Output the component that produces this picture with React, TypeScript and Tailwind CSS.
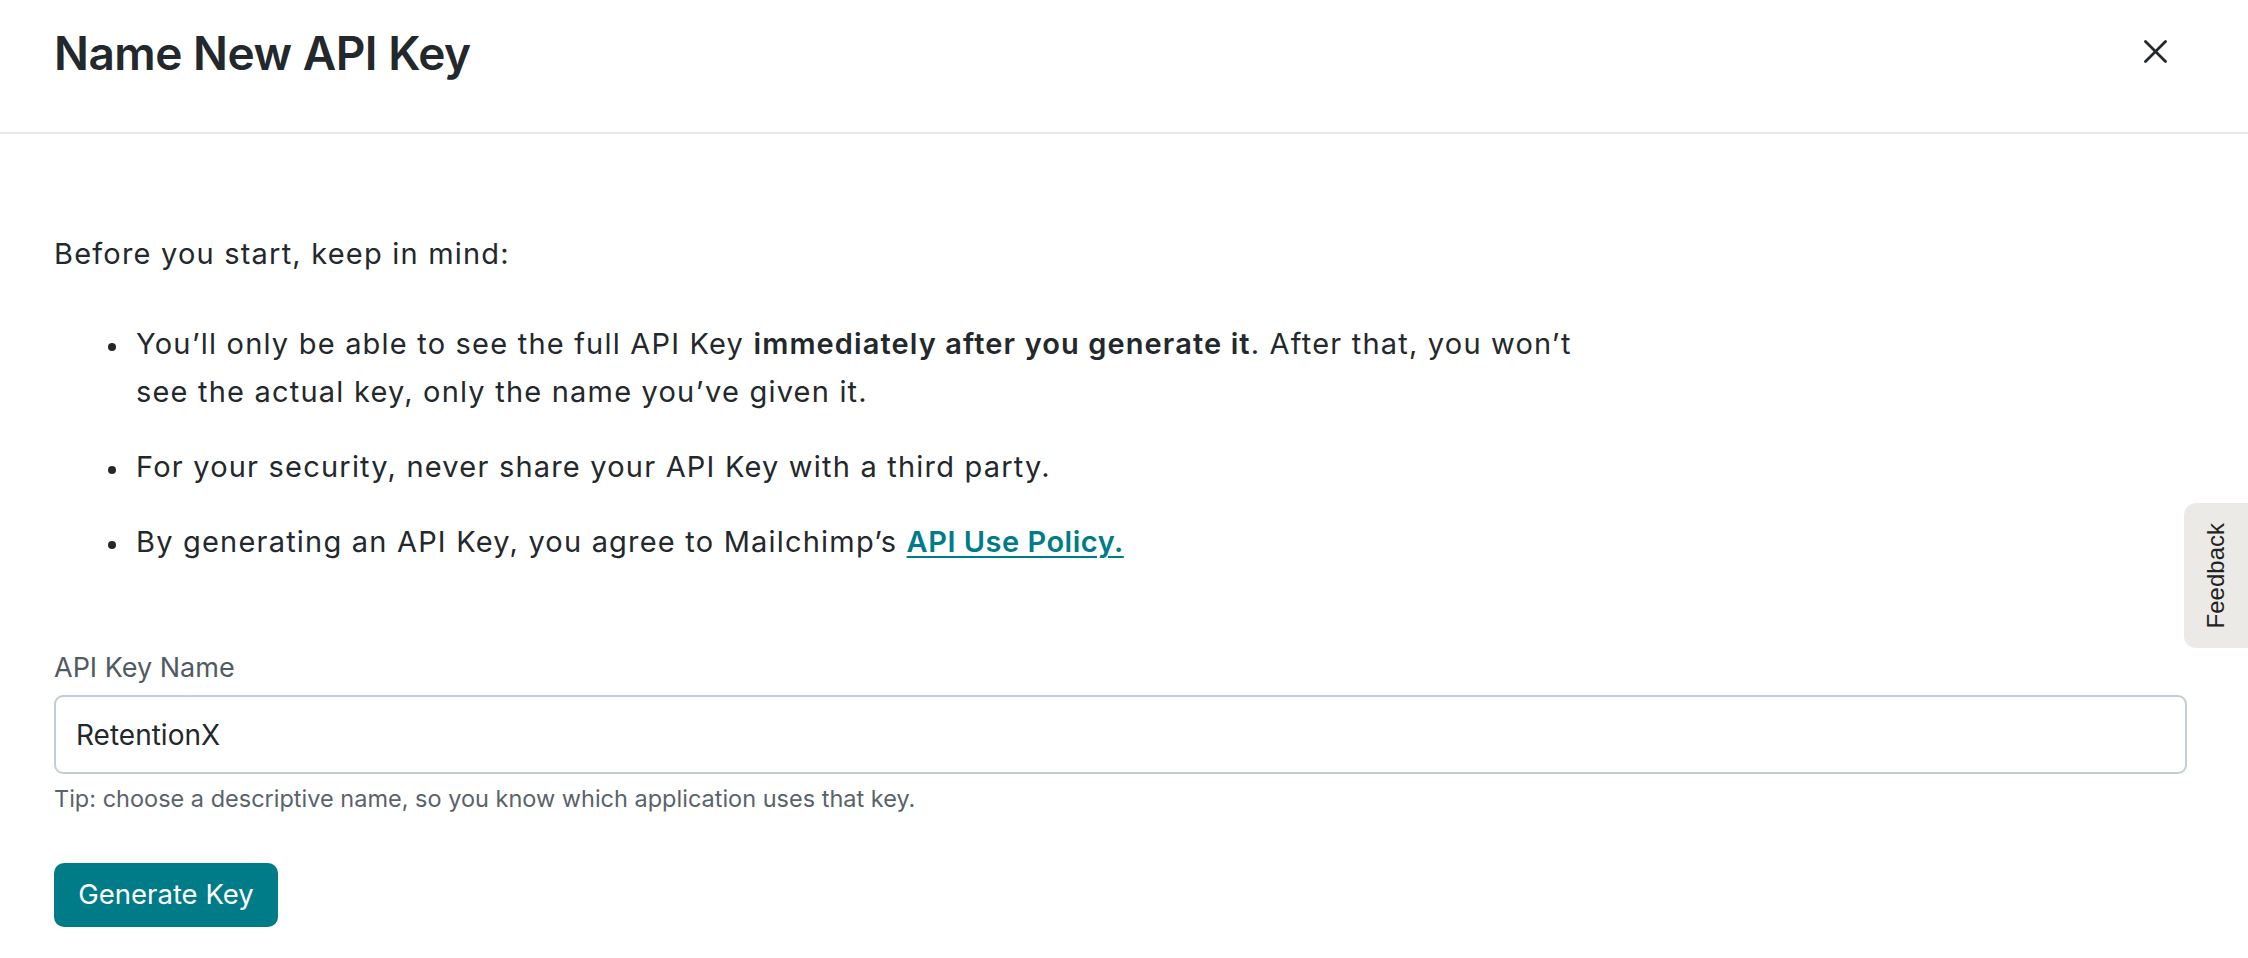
function Bullet({ children }: { children: React.ReactNode }) {
	return (
		<li className="grid grid-cols-[28px_minmax(0,1fr)] items-start">
			<div className="pt-[23px]">
				<div className="h-[8px] w-[8px] rounded-full bg-[#23282c]" />
			</div>
			<div className="leading-[48px]">{children}</div>
		</li>
	);
}

function CloseIcon() {
	return (
		<svg width="23" height="23" viewBox="0 0 23 23" fill="none" stroke="currentColor" strokeWidth="2.8" strokeLinecap="round">
			<line x1="1.5" y1="1.5" x2="21.5" y2="21.5" />
			<line x1="21.5" y1="1.5" x2="1.5" y2="21.5" />
		</svg>
	);
}

export default function App() {
	return (
		<div className="relative min-h-screen bg-white font-['Inter',sans-serif] text-[#23282c]">
			<header className="flex h-[134px] items-start justify-between border-b-2 border-[#e3e8eb] pt-[29px] pr-[81px] pl-[54px]">
				<h1 className="text-[46px] leading-[48px] font-semibold tracking-[-0.5px]">Name New API Key</h1>
				<button className="mt-[11px] text-[#23282c]" aria-label="Close">
					<CloseIcon />
				</button>
			</header>

			<main className="pr-[61px] pl-[54px]">
				<p className="mt-[96px] text-[29px] leading-[48px] tracking-[1.2px]">Before you start, keep in mind:</p>

				<ul className="mt-[42px] flex max-w-[1566px] list-none flex-col gap-[27px] pl-[54px] text-[29px] tracking-[1.2px]">
					<Bullet>
						You’ll only be able to see the full API Key{" "}
						<strong className="font-semibold tracking-[1.1px]">immediately after you generate it</strong>. After that, you won’t see the actual key, only the name you’ve given it.
					</Bullet>
					<Bullet>For your security, never share your API Key with a third party.</Bullet>
					<Bullet>
						By generating an API Key, you agree to Mailchimp’s{" "}
						<a href="#" className="font-semibold tracking-[0.5px] text-[#007c89] underline decoration-2 underline-offset-[4px]">
							API Use Policy.
						</a>
					</Bullet>
				</ul>

				<label className="mt-[82px] block text-[27px] leading-[40px] text-[#4f5b62]">API Key Name</label>
				<div className="mt-[7px] flex h-[79px] items-center rounded-[9px] border-2 border-[#c3cdd5] pl-[20px] text-[28px]">
					RetentionX
				</div>
				<p className="mt-[8px] text-[23.5px] leading-[34px] text-[#59636a]">
					Tip: choose a descriptive name, so you know which application uses that key.
				</p>

				<button className="mt-[47px] flex h-[64px] w-[224px] items-center justify-center rounded-[10px] bg-[#007c89] text-[27.5px] text-white">
					Generate Key
				</button>
			</main>

			<div className="absolute top-[503px] right-0 flex h-[145px] w-[64px] items-center justify-center rounded-l-[12px] bg-[#ebeae7]">
				<span className="rotate-180 font-['Liberation_Sans',sans-serif] text-[24px] text-[#222222] [writing-mode:vertical-rl]">
					Feedback
				</span>
			</div>
		</div>
	);
}
